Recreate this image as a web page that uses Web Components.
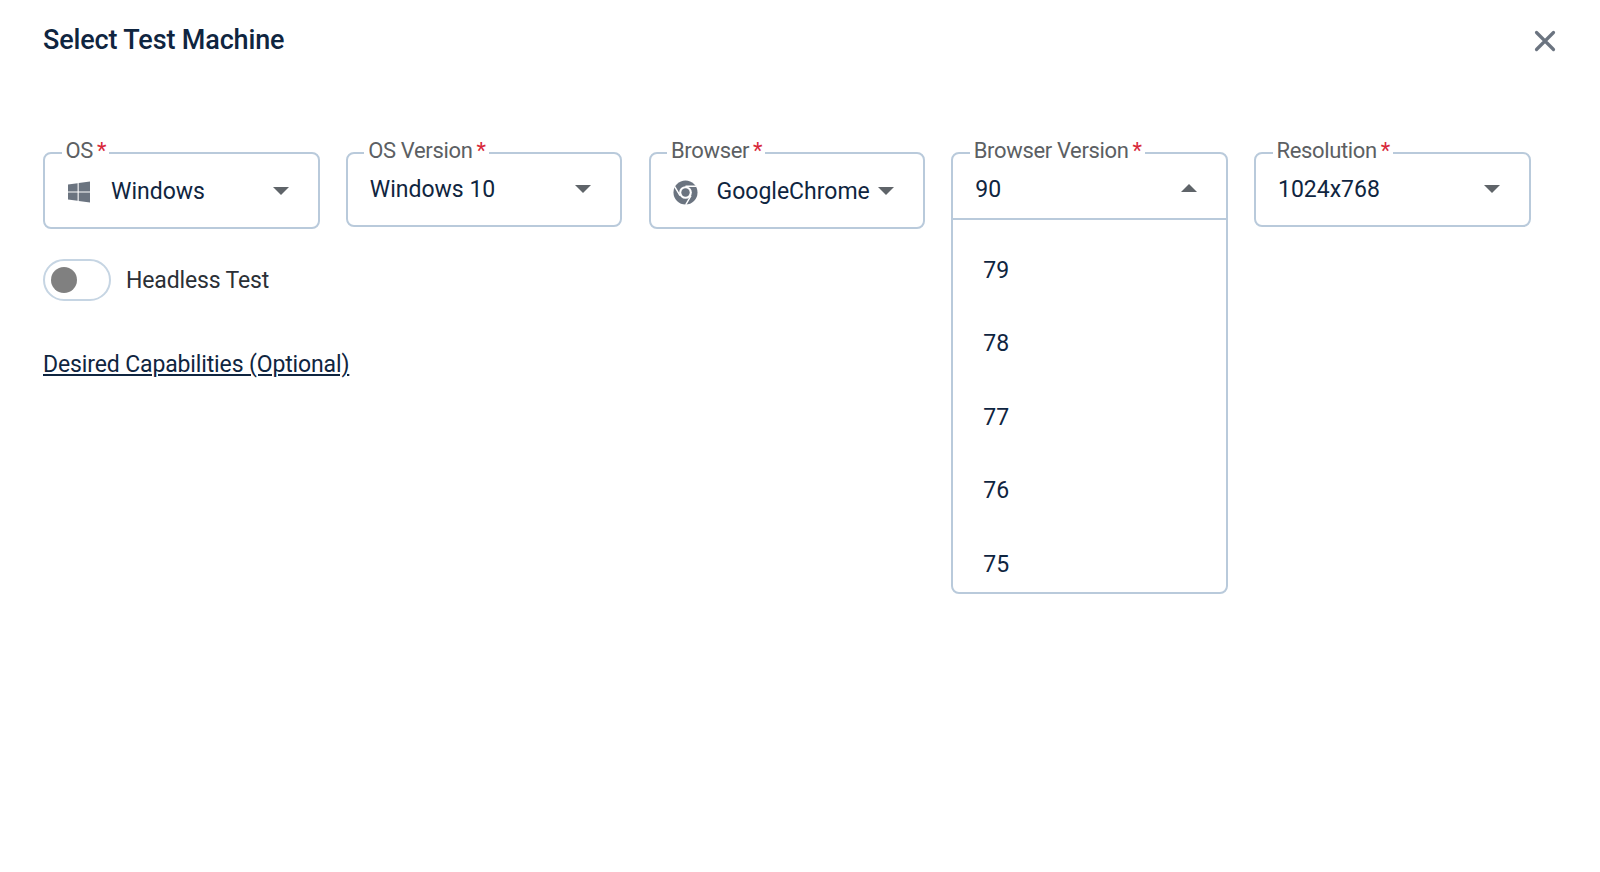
<!DOCTYPE html>
<html>
<head>
<meta charset="utf-8">
<title>Select Test Machine</title>
<style>
    html, body { margin: 0; background: #fff; }
    body { font-family: Roboto, "Liberation Sans", sans-serif; color: #0f2540; height: 872px; overflow: hidden; }
</style>
</head>
<body>
<machine-dialog heading="Select Test Machine">
    <machine-select label="OS" value="Windows" icon="windows" tall></machine-select>
    <machine-select label="OS Version" value="Windows 10"></machine-select>
    <machine-select label="Browser" value="GoogleChrome" icon="chrome" tall></machine-select>
    <machine-select label="Browser Version" value="90" open options="79,78,77,76,75"></machine-select>
    <machine-select label="Resolution" value="1024x768"></machine-select>
</machine-dialog>

<script>
const ICONS = {
    windows: `<svg width="22" height="22" viewBox="0 0 22 22" style="margin-left:1px"><path fill="#6b7480" d="M0 3.6l9.6-1.3v8.1H0zM10.7 2.1L22 .6v9.8H10.7zM0 11.6h9.6v8.1L0 18.4zM10.7 11.6H22v9.8l-11.3-1.5z"/></svg>`,
    chrome: `<svg width="25" height="25" viewBox="0 0 26 26"><circle cx="13" cy="13" r="12.5" fill="#6b7480"/><circle cx="13" cy="13" r="6.6" fill="#fff"/><circle cx="13" cy="13" r="4.4" fill="#6b7480"/><path d="M13 6.4H24M18.7 16.3L13.2 25.8M7.3 16.3L1.8 6.8" stroke="#fff" stroke-width="1.5" fill="none"/></svg>`
};

class MachineSelect extends HTMLElement {
    constructor() {
        super();
        this.attachShadow({ mode: "open" });
    }
    connectedCallback() {
        this.render();
    }
    render() {
        const icon = this.getAttribute("icon");
        const isOpen = this.hasAttribute("open");
        const options = (this.getAttribute("options") || "").split(",").filter(Boolean);
        this.shadowRoot.innerHTML = `
            <style>
                :host { display: block; position: relative; width: 276.5px; }
                fieldset { margin: 0; padding: 0 29px 0 22px; height: 88px; box-sizing: border-box; border: 2px solid #b9cadb; border-radius: 8px; display: flex; align-items: center; }
                :host([tall]) fieldset { height: 90px; }
                :host([open]) fieldset { height: 81px; border-bottom-left-radius: 0; border-bottom-right-radius: 0; }
                legend { padding: 0 3px 4px 4px; margin-left: -5.5px; font-size: 22px; line-height: 24px; color: #5c5f63; white-space: nowrap; letter-spacing: -0.35px; }
                legend b { font-weight: 400; color: #d8293b; margin-left: 4px; }
                .row { display: flex; align-items: center; width: 100%; margin-top: -12px; }
                :host([tall]) .row { margin-top: -10px; }
                :host([open]) .row { margin-top: -5px; }
                .icon { display: flex; width: 44px; flex: none; }
                .value { flex: 1; font-size: 23px; line-height: 28px; color: #0f2540; white-space: nowrap; }
                .caret { flex: none; width: 0; height: 0; margin-top: -2px; border-left: 8px solid transparent; border-right: 8px solid transparent; border-top: 8px solid #5f6469; }
                :host([open]) .caret { margin-top: -4px; border-top: 0; border-bottom: 8px solid #5f6469; }
                .menu { position: absolute; z-index: 2; left: 0; right: 0; top: 79px; height: 376px; box-sizing: border-box; background: #fff; border: 2px solid #b9cadb; border-radius: 0 0 8px 8px; overflow: hidden; padding-top: 14px; }
                .menu div { height: 73.4px; padding-left: 30px; line-height: 73.4px; font-size: 23px; color: #0f2540; }
            </style>
            <fieldset>
                <legend>${this.getAttribute("label")}<b>*</b></legend>
                <div class="row">
                    ${icon ? `<span class="icon">${ICONS[icon]}</span>` : ""}
                    <span class="value">${this.getAttribute("value")}</span>
                    <span class="caret"></span>
                </div>
            </fieldset>
            ${isOpen ? `<div class="menu">${options.map(o => `<div>${o}</div>`).join("")}</div>` : ""}
        `;
    }
}

class MachineDialog extends HTMLElement {
    constructor() {
        super();
        this.attachShadow({ mode: "open" });
    }
    connectedCallback() {
        this.shadowRoot.innerHTML = `
            <style>
                :host { display: block; padding: 23px 44px 0 43px; }
                header { display: flex; justify-content: space-between; align-items: flex-start; height: 116px; }
                h1 { margin: 0; font-size: 27px; line-height: 34px; font-weight: 500; color: #0f2540; letter-spacing: -0.15px; }
                .close { display: flex; margin: 7px 0 0 0; }
                .fields { display: flex; gap: 26.25px; align-items: flex-start; height: 91px; }
                .toggle-row { display: flex; align-items: center; gap: 15px; height: 42px; margin-top: 29px; }
                .toggle { width: 68px; height: 42px; box-sizing: border-box; border: 2px solid #c6d5e3; border-radius: 21px; display: flex; align-items: center; padding-left: 6px; }
                .knob { width: 26px; height: 26px; border-radius: 50%; background: #808080; }
                .toggle-row span { font-size: 23px; color: #2b3036; letter-spacing: -0.15px; }
                a { display: inline-block; margin-top: 49px; font-size: 23px; line-height: 30px; color: #0f2540; text-decoration: underline; letter-spacing: -0.13px; }
            </style>
            <header>
                <h1>${this.getAttribute("heading")}</h1>
                <span class="close"><svg width="22" height="22" viewBox="0 0 22 22"><path d="M2.5 2.5L19.5 19.5M19.5 2.5L2.5 19.5" stroke="#6b7480" stroke-width="3.2" stroke-linecap="round"/></svg></span>
            </header>
            <div class="fields"><slot></slot></div>
            <div class="toggle-row"><div class="toggle"><div class="knob"></div></div><span>Headless Test</span></div>
            <a href="#">Desired Capabilities (Optional)</a>
        `;
    }
}

customElements.define("machine-select", MachineSelect);
customElements.define("machine-dialog", MachineDialog);
</script>
</body>
</html>
